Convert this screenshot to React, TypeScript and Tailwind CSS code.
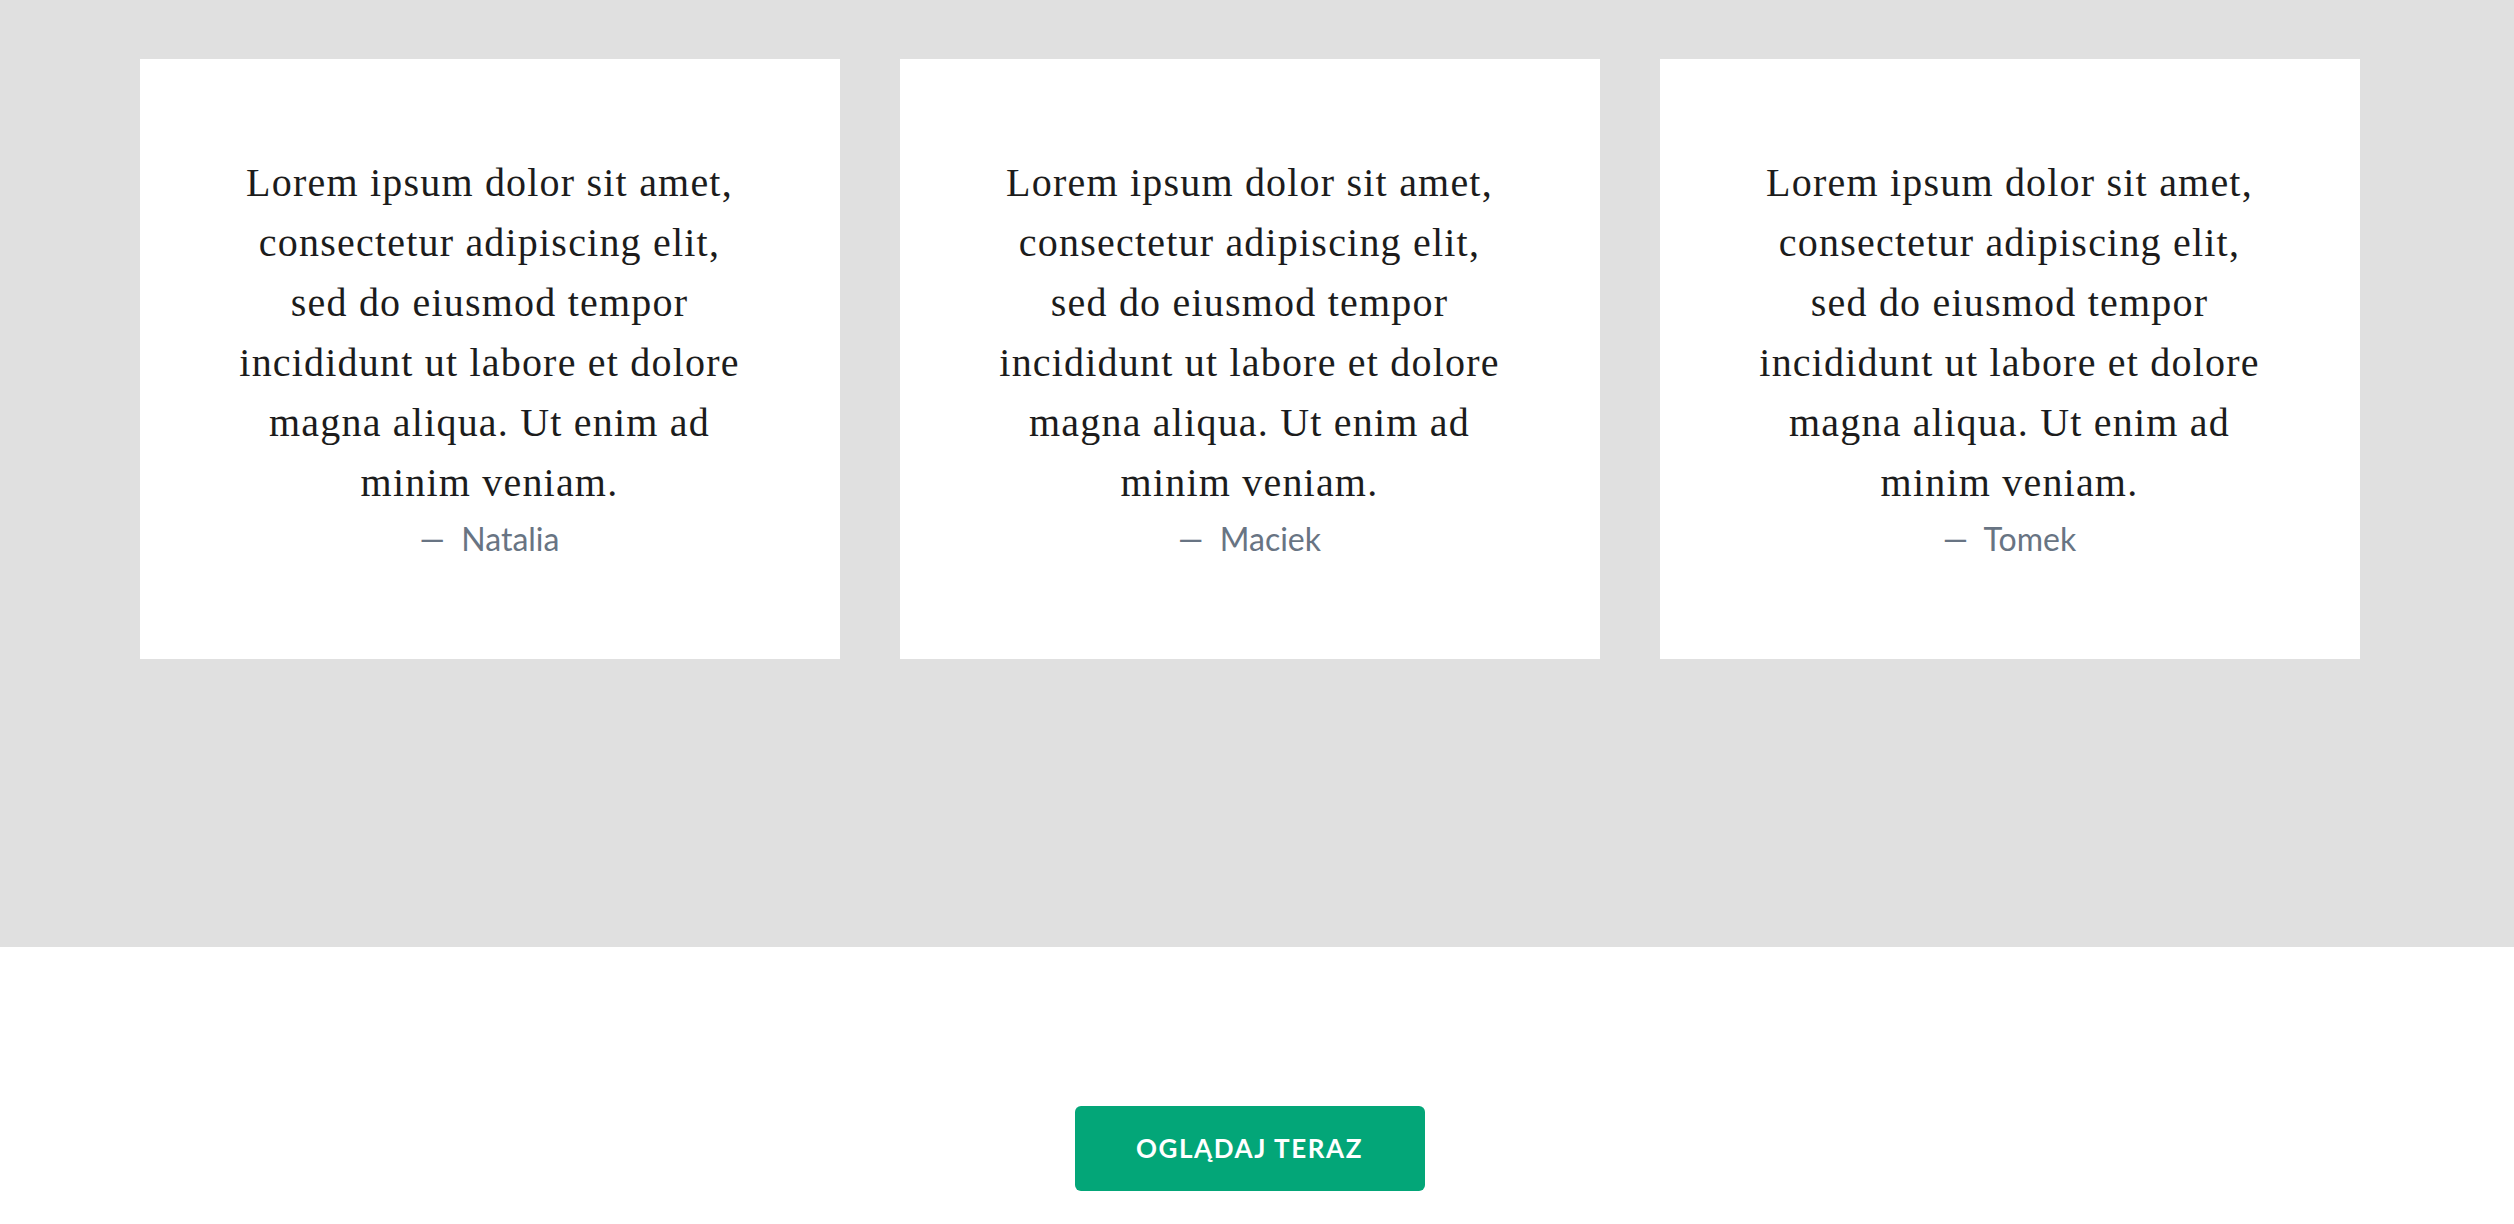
import React from "react";

const quotes = [
  { name: "Natalia" },
  { name: "Maciek" },
  { name: "Tomek" },
];

const lines = [
  "Lorem ipsum dolor sit amet,",
  "consectetur adipiscing elit,",
  "sed do eiusmod tempor",
  "incididunt ut labore et dolore",
  "magna aliqua. Ut enim ad",
  "minim veniam.",
];

export default function App() {
  return (
    <div className="w-[2514px] min-h-[1224px] bg-white">
      <section className="bg-[#e0e0e0] h-[947px] pt-[59px]">
        <div className="w-[2499px] flex justify-center gap-[60px]">
          {quotes.map((q) => (
            <div
              key={q.name}
              className="w-[700px] h-[600px] bg-white pt-[94px] flex flex-col items-center text-center"
            >
              <p
                className="text-[40px] leading-[60px] tracking-[1.2px] text-[#1c1c1c]"
                style={{ fontFamily: '"Liberation Serif", "Times New Roman", serif' }}
              >
                {lines.map((l, i) => (
                  <React.Fragment key={i}>
                    {l}
                    {i < lines.length - 1 && <br />}
                  </React.Fragment>
                ))}
              </p>
              <p
                className="text-[32px] leading-[51px] text-[#687483]"
                style={{ fontFamily: 'Lato, "Open Sans", sans-serif' }}
              >
                —&nbsp; {q.name}
              </p>
            </div>
          ))}
        </div>
      </section>
      <div className="w-[2499px] flex justify-center pt-[159px]">
        <button
          className="w-[350px] h-[85px] rounded-[6px] bg-[#03a678] text-white text-[26px] font-bold tracking-[1.6px] uppercase flex items-center justify-center"
          style={{ fontFamily: 'Lato, "Open Sans", sans-serif' }}
        >
          OGLĄDAJ TERAZ
        </button>
      </div>
    </div>
  );
}
